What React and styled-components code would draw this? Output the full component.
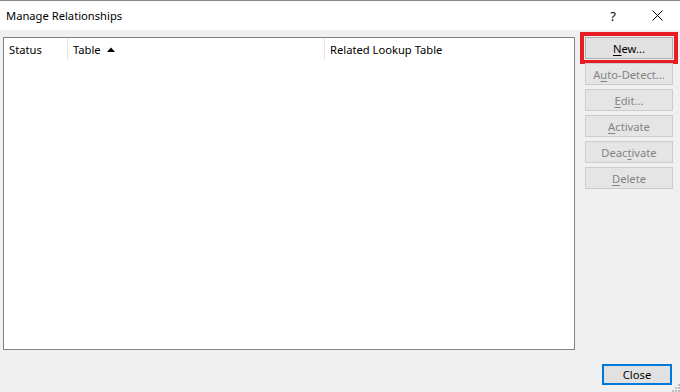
import React from "react";
import styled, { createGlobalStyle } from "styled-components";

const Global = createGlobalStyle`
  html, body { margin: 0; padding: 0; background: #f0f0f0; }
  body { font-family: "Noto Sans", "Open Sans", sans-serif; font-size: 11px; color: #000; }
  #root { width: 680px; height: 392px; overflow: hidden; }
`;

const Window = styled.div`
  width: 680px;
  height: 392px;
  display: flex;
  flex-direction: column;
  background: #f0f0f0;
  border-top: 1px solid #8a8a8a;
  box-sizing: border-box;
  position: relative;
`;

const TitleBar = styled.div`
  height: 29px;
  background: #fff;
  display: flex;
  align-items: center;
  padding-left: 6px;
  flex-shrink: 0;
`;

const Title = styled.div`
  flex: 1;
  font-size: 11.2px;
  color: #000;
  padding-bottom: 1px;
`;

const TitleButton = styled.div`
  width: ${(p) => p.$w}px;
  height: 29px;
  display: flex;
  align-items: center;
  justify-content: center;
  color: #000;
  font-size: 13px;
`;

const Body = styled.div`
  flex: 1;
  display: flex;
  flex-direction: column;
  padding: 7px 7px 7px 3px;
`;

const Main = styled.div`
  display: flex;
  gap: 10px;
`;

const ListBox = styled.div`
  width: 572px;
  height: 313px;
  box-sizing: border-box;
  border: 1px solid #828282;
  background: #fff;
`;

const HeaderRow = styled.div`
  display: flex;
  height: 22px;
`;

const HeaderCell = styled.div`
  width: ${(p) => (p.$w ? `${p.$w}px` : "auto")};
  flex: ${(p) => (p.$w ? "none" : 1)};
  box-sizing: border-box;
  border-right: ${(p) => (p.$last ? "none" : "1px solid #e5e5e5")};
  padding-left: 5px;
  padding-top: 1px;
  display: flex;
  align-items: center;
  gap: 6px;
  font-size: 11.2px;
  color: #000;
`;

const Buttons = styled.div`
  display: flex;
  flex-direction: column;
  gap: 4px;
`;

const Btn = styled.div`
  width: 88px;
  height: 22px;
  box-sizing: border-box;
  display: flex;
  align-items: center;
  justify-content: center;
  font-size: 11.2px;
  background: ${(p) => (p.$disabled ? "#e5e5e5" : "#e1e1e1")};
  border: 1px solid ${(p) => (p.$disabled ? "#cccccc" : "#adadad")};
  color: ${(p) => (p.$disabled ? "#838383" : "#000")};
  ${(p) => (p.$marked ? "outline: 4px solid #e81c24; outline-offset: 1px;" : "")}
  u { text-decoration: underline; text-underline-offset: 2px; }
`;

const Footer = styled.div`
  margin-top: auto;
  display: flex;
  justify-content: flex-end;
  padding-right: 1px;
`;

const CloseBtn = styled.div`
  width: 70px;
  height: 21px;
  box-sizing: border-box;
  display: flex;
  align-items: center;
  justify-content: center;
  background: #e1e1e1;
  border: 2px solid #0078d7;
  font-size: 11.2px;
  color: #000;
`;

const Grip = styled.svg`
  position: absolute;
  right: 0;
  bottom: 0;
`;

const SortArrow = () => (
  <svg width="8" height="5" viewBox="0 0 8 5">
    <path d="M0 5 L4 0.5 L8 5 Z" fill="#000" />
  </svg>
);

export default function App() {
  return (
    <>
      <Global />
      <Window>
        <TitleBar>
          <Title>Manage Relationships</Title>
          <TitleButton $w={42}>?</TitleButton>
          <TitleButton $w={46}>
            <svg width="11" height="11" viewBox="0 0 11 11">
              <path d="M0.5 0.5 L10.5 10.5 M10.5 0.5 L0.5 10.5" stroke="#000" strokeWidth="1" />
            </svg>
          </TitleButton>
        </TitleBar>
        <Body>
          <Main>
            <ListBox>
              <HeaderRow>
                <HeaderCell $w={64}>Status</HeaderCell>
                <HeaderCell $w={257}>
                  Table <SortArrow />
                </HeaderCell>
                <HeaderCell $last>Related Lookup Table</HeaderCell>
              </HeaderRow>
            </ListBox>
            <Buttons>
              <Btn $marked><span><u>N</u>ew...</span></Btn>
              <Btn $disabled><span>A<u>u</u>to-Detect...</span></Btn>
              <Btn $disabled><span><u>E</u>dit...</span></Btn>
              <Btn $disabled><span><u>A</u>ctivate</span></Btn>
              <Btn $disabled><span>Deac<u>t</u>ivate</span></Btn>
              <Btn $disabled><span><u>D</u>elete</span></Btn>
            </Buttons>
          </Main>
          <Footer>
            <CloseBtn>Close</CloseBtn>
          </Footer>
        </Body>
        <Grip width="8" height="8" viewBox="0 0 8 8">
          {[[6, 0], [6, 3], [3, 3], [6, 6], [3, 6], [0, 6]].map(([x, y], i) => (
            <rect key={i} x={x} y={y} width="2" height="2" fill="#bcbcbc" />
          ))}
        </Grip>
      </Window>
    </>
  );
}
